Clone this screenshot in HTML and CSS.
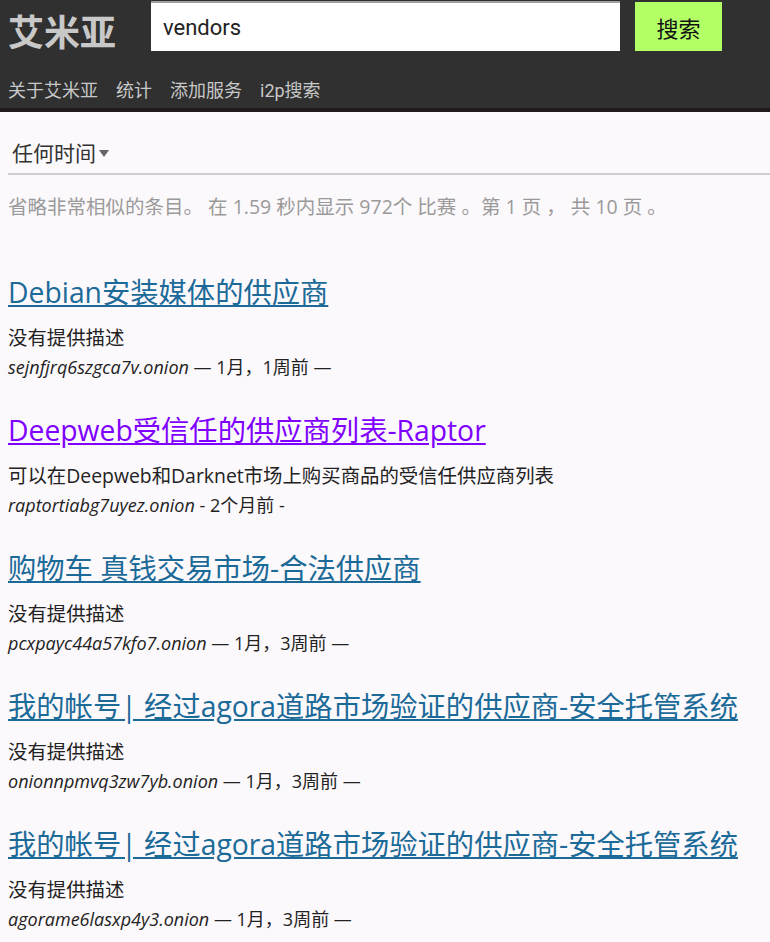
FILE: index.html
```html
<!DOCTYPE html>
<html lang="zh">
<head>
<meta charset="utf-8">
<title>艾米亚 - vendors</title>
<link rel="stylesheet" href="styles.css">
</head>
<body>
<header class="header">
  <div class="top">
    <a class="logo" href="#">艾米亚</a>
    <form class="search">
      <input class="search-input" type="text" value="vendors">
      <button class="search-btn" type="button">搜索</button>
    </form>
  </div>
  <nav class="nav">
    <a href="#">关于艾米亚</a>
    <a href="#">统计</a>
    <a href="#">添加服务</a>
    <a href="#">i2p搜索</a>
  </nav>
</header>
<main class="main">
  <div class="filter">任何时间<span class="caret"></span></div>
  <p class="stats">省略非常相似的条目。 在 1.59 秒内显示 972个 比赛 。第 1 页 ， 共 10 页 。</p>
  <ol class="results">
    <li class="result">
      <a class="title" href="#">Debian安装媒体的供应商</a>
      <p class="desc">没有提供描述</p>
      <p class="meta"><cite>sejnfjrq6szgca7v.onion</cite> — 1月，1周前 —</p>
    </li>
    <li class="result">
      <a class="title visited" href="#">Deepweb受信任的供应商列表-Raptor</a>
      <p class="desc">可以在Deepweb和Darknet市场上购买商品的受信任供应商列表</p>
      <p class="meta"><cite>raptortiabg7uyez.onion</cite> - 2个月前 -</p>
    </li>
    <li class="result">
      <a class="title" href="#">购物车 真钱交易市场-合法供应商</a>
      <p class="desc">没有提供描述</p>
      <p class="meta"><cite>pcxpayc44a57kfo7.onion</cite> — 1月，3周前 —</p>
    </li>
    <li class="result">
      <a class="title" href="#">我的帐号| 经过agora道路市场验证的供应商-安全托管系统</a>
      <p class="desc">没有提供描述</p>
      <p class="meta"><cite>onionnpmvq3zw7yb.onion</cite> — 1月，3周前 —</p>
    </li>
    <li class="result">
      <a class="title" href="#">我的帐号| 经过agora道路市场验证的供应商-安全托管系统</a>
      <p class="desc">没有提供描述</p>
      <p class="meta"><cite>agorame6lasxp4y3.onion</cite> — 1月，3周前 —</p>
    </li>
  </ol>
</main>
</body>
</html>
```
FILE: styles.css
```css
* { box-sizing: border-box; }
html, body { margin: 0; padding: 0; }
body {
  background: #fcf9fc;
  font-family: "Open Sans", "Noto Sans CJK SC", sans-serif;
  color: #222;
}
.header {
  background: #303030;
  border-bottom: 4px solid #1e1a1e;
  height: 112px;
}
.top {
  display: flex;
  align-items: flex-start;
  height: 70px;
}
.logo {
  font-family: "Noto Sans CJK SC", sans-serif;
  font-size: 36px;
  font-weight: 700;
  color: #c8c8c8;
  text-decoration: none;
  margin: 8px 0 0 8px;
  line-height: 44px;
  width: 143px;
}
.search {
  display: flex;
  margin-top: 1px;
}
.search-input {
  width: 469px;
  height: 50px;
  border: none;
  border-top: 2px solid #a0a0a0;
  background: #fff;
  padding: 0 12px;
  font-family: Roboto, "Noto Sans CJK SC", sans-serif;
  font-size: 22px;
  color: #222;
  outline: none;
}
.search-btn {
  margin-left: 15px;
  margin-top: 1px;
  width: 87px;
  height: 49px;
  border: none;
  background: #b3ff66;
  font-family: "Noto Sans CJK SC", sans-serif;
  font-size: 22px;
  color: #111;
}
.nav {
  display: flex;
  gap: 18px;
  padding: 0 8px;
  height: 38px;
  align-items: center;
}
.nav a {
  font-family: Roboto, "Noto Sans CJK SC", sans-serif;
  color: #c8c8c8;
  text-decoration: none;
  font-size: 18px;
}
.main { padding: 0 0 0 8px; }
.filter {
  margin-top: 21px;
  padding-left: 4px;
  padding-bottom: 3px;
  font-size: 21px;
  color: #333;
  height: 42px;
  border-bottom: 2px solid #d2cbd2;
  display: flex;
  align-items: center;
}
.caret {
  display: inline-block;
  margin-left: 3px;
  margin-top: 4px;
  border-left: 5px solid transparent;
  border-right: 5px solid transparent;
  border-top: 7px solid #666;
}
.stats {
  margin: 20px 0 0;
  font-size: 19.5px;
  line-height: 24px;
  color: #9a9a9a;
}
.results {
  list-style: none;
  margin: 53px 0 0;
  padding: 0;
}
.result { margin-bottom: 28px; }
.title {
  font-size: 28.3px;
  color: #1b6a98;
  text-decoration: underline;
  line-height: 40px;
}
.title.visited { color: #7f00ff; }
.desc {
  margin: 12px 0 0;
  font-size: 19.4px;
  line-height: 28px;
  color: #222;
}
.meta {
  margin: 0;
  font-size: 18px;
  line-height: 30px;
  color: #222;
}
.meta cite { font-style: italic; }
```
